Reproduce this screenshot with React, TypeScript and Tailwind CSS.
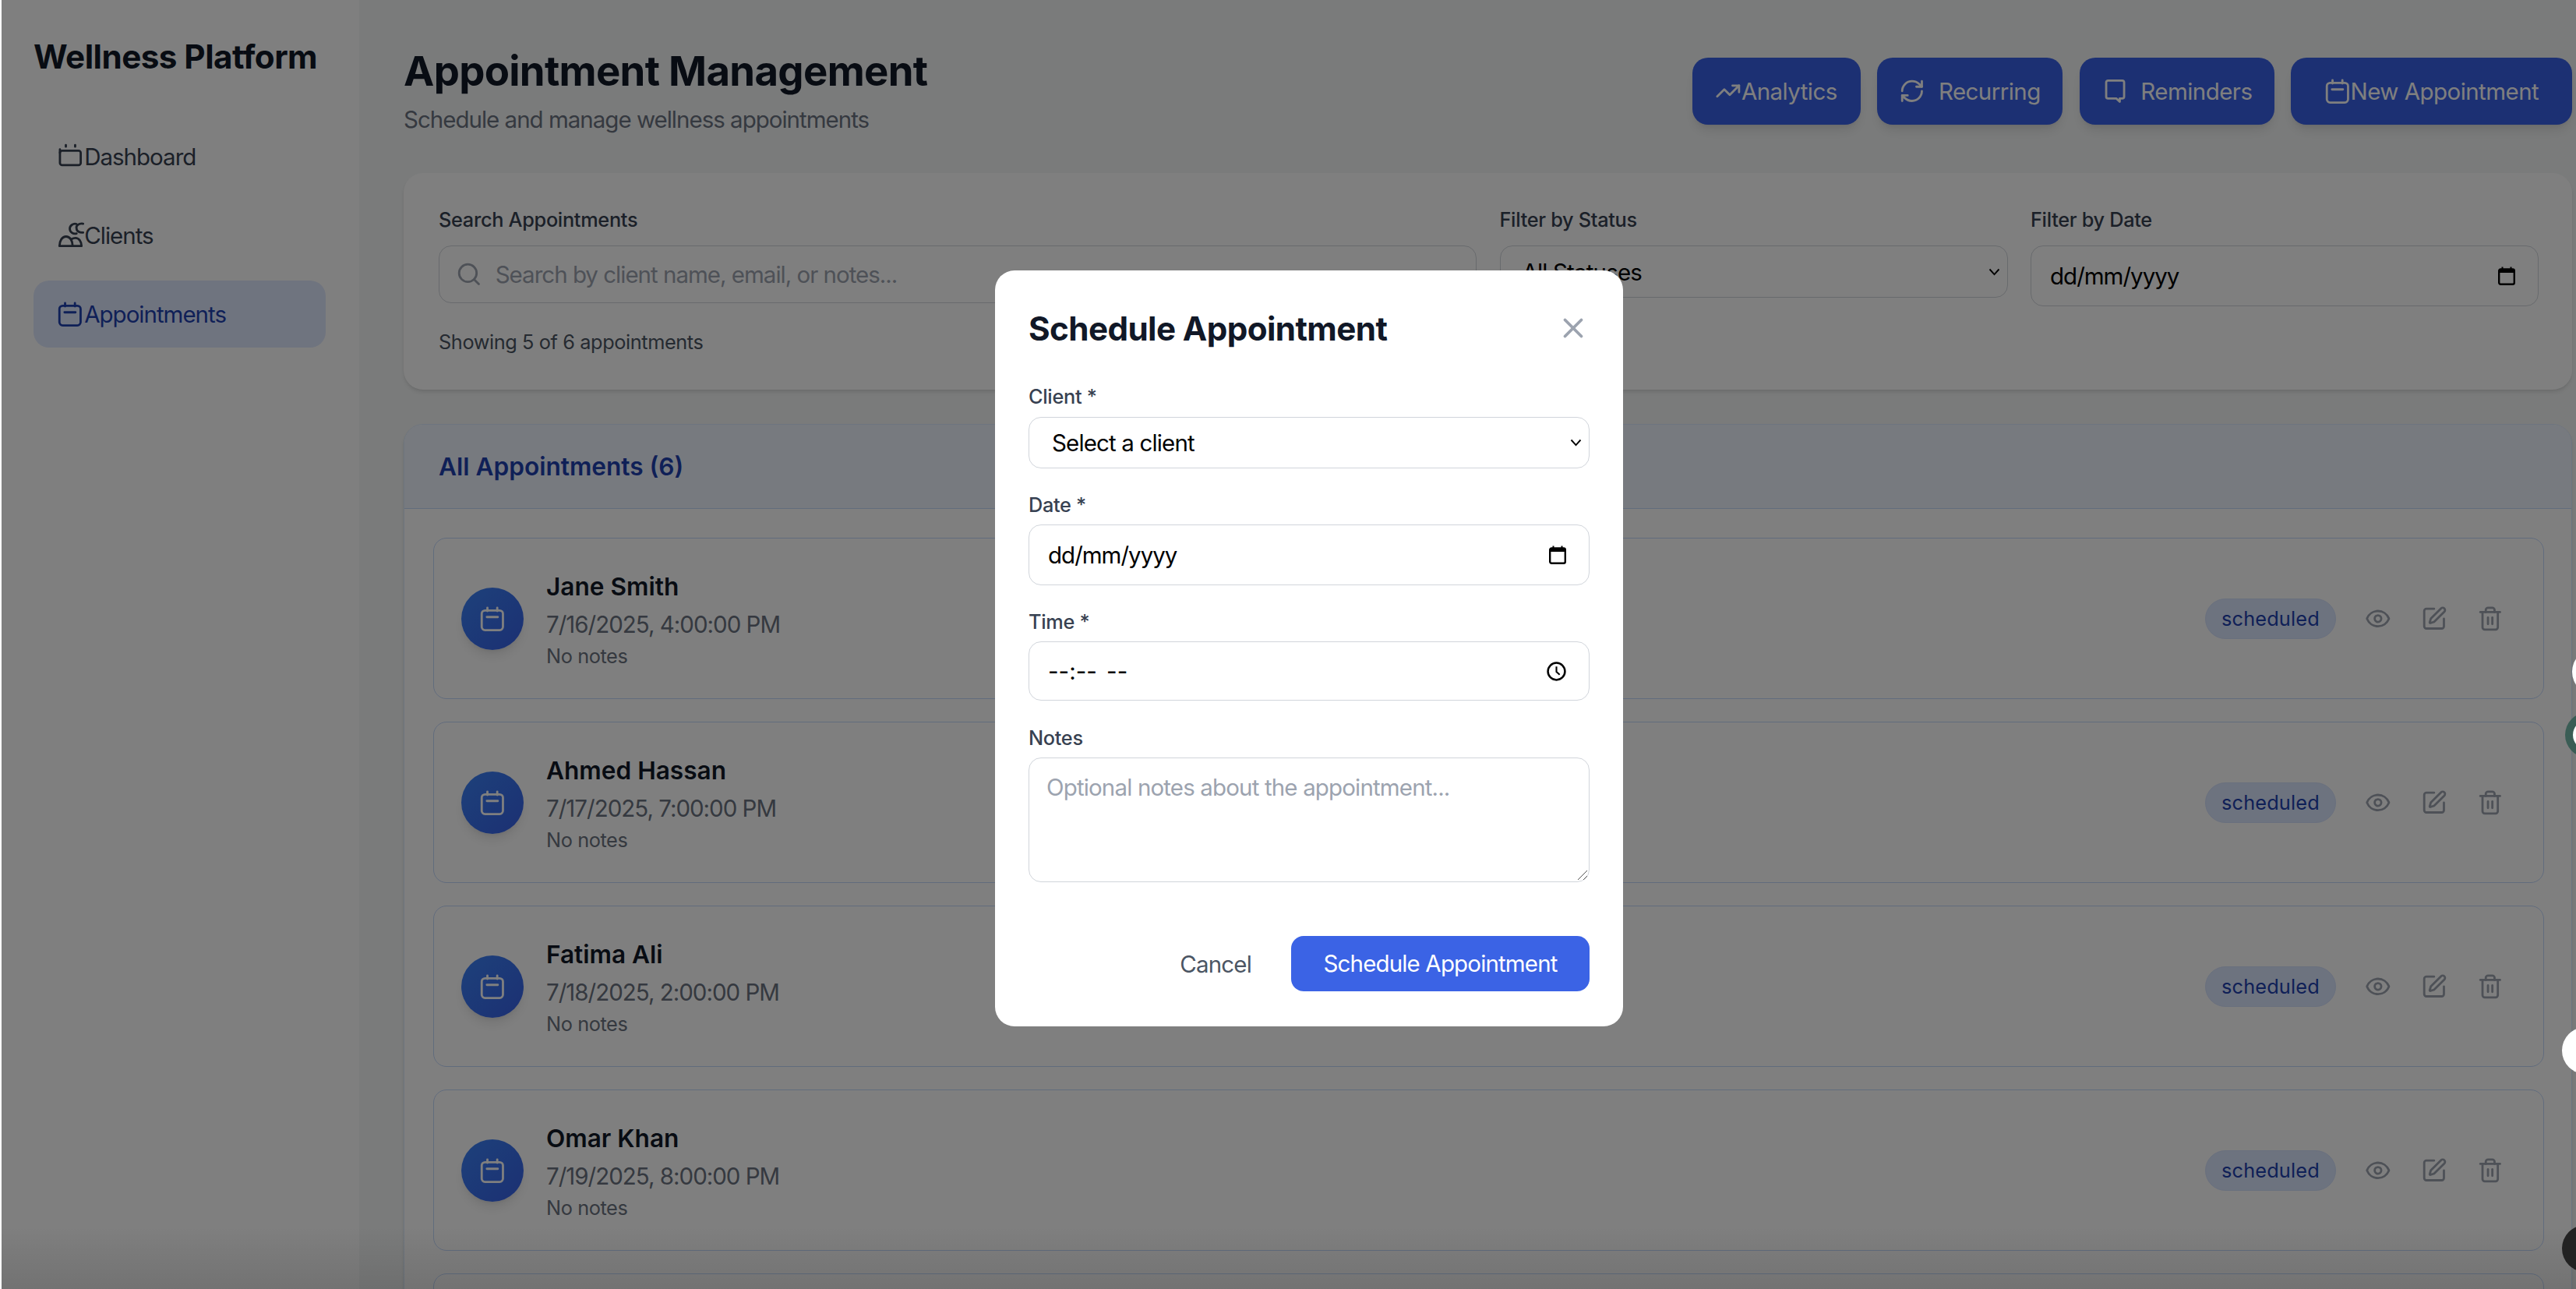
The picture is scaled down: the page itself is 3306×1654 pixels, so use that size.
import { Eye, RefreshCw, Search, SquarePen, Trash2, TrendingUp, X } from "lucide-react";

const ICON = "w-[33.7px] h-[33.7px] shrink-0 overflow-visible";

function CalendarIcon({ className = ICON }: { className?: string }) {
  return (
    <svg viewBox="0 0 24 24" fill="none" stroke="currentColor" strokeWidth="2" strokeLinecap="round" strokeLinejoin="round" className={className}>
      <rect x="2.3" y="4.5" width="19.4" height="18" rx="3" />
      <path d="M7.5 2v3M16.5 2v3M7 10.5h10" />
    </svg>
  );
}

function DashboardIcon() {
  return (
    <svg viewBox="0 0 24 24" fill="none" stroke="currentColor" strokeWidth="2" strokeLinecap="round" strokeLinejoin="round" className={ICON}>
      <rect x="2.8" y="6.7" width="19" height="13.2" rx="2" />
      <path d="M8.2 1.6v1.4M16.7 1.6v1.4M2.8 5.500v3" />
    </svg>
  );
}

function ClientsIcon() {
  return (
    <svg viewBox="0 0 24 24" fill="none" stroke="currentColor" strokeWidth="2" strokeLinecap="round" strokeLinejoin="round" className={ICON}>
      <path d="M18 1.8a4.8 4.5 0 1 0 0 8.6" />
      <path d="M24 1.5a5 3.6 0 0 0-6 4.4a5 3.6 0 0 0 6 3.6" />
      <path d="M2.4 21.8c0-5 2.6-8.6 6-8.6s6 3.6 6 8.6" />
      <path d="M13.5 15.5c1-.6 2.300-1 3.500-1c3.200 0 5.500 3.200 5.500 7.300" />
      <path d="M2.400 21.800h20.100" />
    </svg>
  );
}

function ReminderIcon() {
  return (
    <svg viewBox="0 0 24 24" fill="none" stroke="currentColor" strokeWidth="2" strokeLinecap="round" strokeLinejoin="round" className={ICON}>
      <path d="M6 2.400h13a1.700 1.700 0 0 1 1.700 1.700v13a1.700 1.700 0 0 1-1.700 1.700h-2.300v3l-3-3H6a1.700 1.700 0 0 1-1.700-1.700v-13A1.700 1.700 0 0 1 6 2.400z" />
    </svg>
  );
}

function Chevron({ className }: { className: string }) {
  return (
    <svg viewBox="0 0 12 8" fill="none" stroke="currentColor" strokeWidth="1.500" className={className}>
      <path d="M1.200 1.200 6 6.500l4.800-5.300" />
    </svg>
  );
}

function NativeCalendar() {
  return (
    <svg viewBox="0 0 22 24" className="w-[22px] h-[24px] shrink-0" fill="none" stroke="#000">
      <rect x="1.200" y="3.500" width="19.600" height="19.300" rx="2" strokeWidth="2.400" />
      <path d="M1 3.500h20V8H1z" fill="#000" stroke="none" />
      <path d="M5.500 0.500v3M16.500 0.500v3" strokeWidth="2" />
    </svg>
  );
}

function NativeClock() {
  return (
    <svg viewBox="0 0 24 24" className="w-[25px] h-[25px] shrink-0" fill="none" stroke="#000">
      <circle cx="12" cy="12" r="10.500" strokeWidth="2.400" />
      <path d="M12 6v6.500l4 3.500" strokeWidth="2" />
    </svg>
  );
}

const topButtons = [
  { label: "Analytics", icon: <TrendingUp className={ICON} strokeWidth={2} />, cls: "px-[29.5px] w-[216px]" },
  { label: "Recurring", icon: <RefreshCw className={ICON} strokeWidth={2} />, cls: "px-[29.5px] gap-[17px] w-[238px]" },
  { label: "Reminders", icon: <ReminderIcon />, cls: "px-[29.5px] gap-[17px] w-[250px]" },
  { label: "New Appointment", icon: <CalendarIcon />, cls: "px-[44px] w-[361px]" },
];

const rows = [
  { name: "Jane Smith", when: "7/16/2025, 4:00:00 PM" },
  { name: "Ahmed Hassan", when: "7/17/2025, 7:00:00 PM" },
  { name: "Fatima Ali", when: "7/18/2025, 2:00:00 PM" },
  { name: "Omar Khan", when: "7/19/2025, 8:00:00 PM" },
];

const BODY = "text-[29.5px] tracking-[-0.85px]";
const TIGHT = "text-[29.5px] tracking-[-1px]";
const LABEL = "block text-[25.3px] leading-[36px] font-medium tracking-[-0.3px] text-[#374151]";
const FIELD = "flex items-center border-[1.5px] border-[#d1d5db] rounded-[16px] bg-white text-black";

function Row({ name, when }: { name: string; when: string }) {
  return (
    <div className="h-[207px] shrink-0 flex items-center border-[1.5px] border-[#c3d8fb] rounded-[17px] pl-[35px] pr-[51px] bg-white">
      <div className="w-[80px] h-[80px] rounded-full bg-gradient-to-br from-[#3b82f6] to-[#3860e6] shadow-lg flex items-center justify-center text-white shrink-0">
        <CalendarIcon className="w-[33.7px] h-[33.7px] overflow-visible" />
      </div>
      <div className="ml-[29px] flex-1 mt-[3px]">
        <div className="text-[31.6px] leading-[44px] font-semibold text-[#111827]">{name}</div>
        <div className={`mt-[5px] leading-[42px] text-[#6b7280] ${TIGHT}`}>{when}</div>
        <div className="mt-[2px] text-[25.3px] leading-[36px] tracking-[-0.4px] text-[#6b7280]">No notes</div>
      </div>
      <div className="w-[168px] h-[52px] rounded-full bg-[#dbe6fe] border-[1.5px] border-[#d3e0fc] flex items-center justify-center text-[25.3px] tracking-[0.15px] text-[#1e40af]">
        scheduled
      </div>
      <div className="flex items-center ml-[37px] gap-[38.5px] text-[#9ca3af]">
        <Eye className="w-[33.7px] h-[33.7px]" strokeWidth={2} />
        <SquarePen className="w-[33.7px] h-[33.7px]" strokeWidth={2} />
        <Trash2 className="w-[33.7px] h-[33.7px]" strokeWidth={2} />
      </div>
    </div>
  );
}

export default function App() {
  return (
    <div className="relative w-[3306px] h-[1654px] overflow-hidden flex bg-white pl-[2px] [font-family:Inter,sans-serif]">
      <aside className="w-[459px] shrink-0 bg-white pl-[41px] pr-[43px] pt-[50px]">
        <h1 className="text-[42.2px] leading-[46px] font-bold tracking-[-0.55px] text-[#111827]">Wellness Platform</h1>
        <nav className={`mt-[62px] flex flex-col gap-[15px] text-[#374151] ${TIGHT}`}>
          <div className="h-[86px] flex items-center gap-[2px] px-[29.5px] rounded-[20px]"><DashboardIcon />Dashboard</div>
          <div className="h-[86px] flex items-center gap-[2px] px-[29.5px] rounded-[20px]"><ClientsIcon />Clients</div>
          <div className="h-[86px] flex items-center gap-[2px] px-[29.5px] rounded-[20px] bg-[#dfe8ff] text-[#1e40af]"><CalendarIcon />Appointments</div>
        </nav>
      </aside>

      <main className="flex-1 min-w-0 bg-[#f5f7f7] pl-[57px] pr-[5px] pt-[66px]">
        <header className="h-[156px] flex justify-between items-start">
          <div>
            <h2 className="text-[52.7px] leading-[50px] font-bold tracking-[-0.7px] text-[#111827]">Appointment Management</h2>
            <p className={`mt-[16px] leading-[42px] text-[#6b7280] ${TIGHT}`}>Schedule and manage wellness appointments</p>
          </div>
          <div className="flex gap-[21.5px] mt-[8px]">
            {topButtons.map((b) => (
              <div key={b.label} className={`h-[86px] flex items-center justify-center rounded-[20px] bg-[#3860e6] text-white text-[29.5px] tracking-[-0.55px] shadow-lg ${b.cls}`}>
                {b.icon}
                <span className="whitespace-nowrap">{b.label}</span>
              </div>
            ))}
          </div>
        </header>

        <section className="h-[278px] bg-white rounded-[25px] shadow-md px-[45px] pt-[42px]">
          <div className="grid grid-cols-[1332px_652px_652px] gap-x-[29.5px] items-start">
            <div>
              <label className={LABEL}>Search Appointments</label>
              <div className="mt-[15px] h-[74px] flex items-center border-[1.5px] border-[#d1d5db] rounded-[16px] pl-[21px] text-[#9ca3af]">
                <Search className="w-[33.7px] h-[33.7px] shrink-0" strokeWidth={2} />
                <span className={`ml-[17px] pt-[1px] ${TIGHT}`}>Search by client name, email, or notes...</span>
              </div>
            </div>
            <div>
              <label className={LABEL}>Filter by Status</label>
              <div className={`mt-[15px] h-[67px] justify-between pl-[28px] pr-[9px] ${FIELD}`}>
                <span className={`pt-[1px] ${BODY}`}>All Statuses</span>
                <Chevron className="w-[15px] h-[10px] text-black" />
              </div>
            </div>
            <div>
              <label className={LABEL}>Filter by Date</label>
              <div className={`mt-[15px] h-[78px] justify-between pl-[24px] pr-[29px] ${FIELD}`}>
                <span className={TIGHT}>dd/mm/yyyy</span>
                <NativeCalendar />
              </div>
            </div>
          </div>
          <p className="mt-[28px] text-[25.3px] leading-[36px] tracking-[-0.4px] text-[#4b5563]">Showing 5 of 6 appointments</p>
        </section>

        <section className="mt-[44px] bg-white rounded-[25px] shadow-md border-[1.5px] border-[#dbeafe] h-[1200px] overflow-hidden">
          <div className="h-[108px] flex items-center px-[44px] bg-[#eef4ff] border-b-[1.5px] border-[#c3d8fb]">
            <h3 className="text-[31.6px] font-semibold text-[#1e40af]">All Appointments (6)</h3>
          </div>
          <div className="flex flex-col gap-[29px] pt-[37px] pl-[37px] pr-[35px]">
            {rows.map((r) => (
              <Row key={r.name} name={r.name} when={r.when} />
            ))}
            <div className="h-[207px] shrink-0 border-[1.5px] border-[#c3d8fb] rounded-[17px] bg-white" />
          </div>
        </section>
      </main>

      {/* dimming layer with the dialog */}
      <div className="absolute inset-0 left-[2px] bg-black/50 flex items-center justify-center pl-[52px] pt-[10px]">
        <div className="absolute inset-x-0 bottom-0 h-[80px] bg-gradient-to-t from-black/10 to-transparent" />
        <div className="relative w-[806px] h-[970px] bg-white rounded-[25px] px-[43px] pt-[52px]">
          <div className="flex items-center justify-between h-[46px]">
            <h2 className="text-[42.2px] leading-[46px] font-bold tracking-[-0.6px] text-[#111827]">Schedule Appointment</h2>
            <X className="w-[42px] h-[42px] -mt-[3px] text-[#9ca3af]" strokeWidth={2.200} />
          </div>

          <label className={`${LABEL} mt-[46px]`}>Client *</label>
          <div className={`mt-[8px] h-[66px] justify-between pl-[29px] pr-[9px] ${FIELD}`}>
            <span className={BODY}>Select a client</span>
            <Chevron className="w-[15px] h-[10px] text-black" />
          </div>

          <label className={`${LABEL} mt-[29px]`}>Date *</label>
          <div className={`mt-[7px] h-[78px] justify-between pl-[24px] pr-[29px] ${FIELD}`}>
            <span className={TIGHT}>dd/mm/yyyy</span>
            <NativeCalendar />
          </div>

          <label className={`${LABEL} mt-[29px]`}>Time *</label>
          <div className={`mt-[7px] h-[76px] justify-between pl-[24px] pr-[29px] ${FIELD}`}>
            <span className="text-[29.5px] [word-spacing:4px]">--:-- --</span>
            <NativeClock />
          </div>

          <label className={`${LABEL} mt-[30px]`}>Notes</label>
          <div className="relative mt-[7px]">
            <textarea
              className={`block w-full h-[160px] resize-none border-[1.5px] border-[#d1d5db] rounded-[16px] px-[22px] pt-[19px] leading-[36px] placeholder:text-[#9ca3af] outline-none ${BODY}`}
              placeholder="Optional notes about the appointment..."
            />
            <svg viewBox="0 0 14 14" className="absolute right-[2px] bottom-[2px] w-[14px] h-[14px]" fill="none" stroke="#555" strokeWidth="1">
              <path d="M1 13 13 1M8 13l5-5" />
            </svg>
          </div>

          <div className="mt-[69px] flex items-center justify-end">
            <span className={`pt-[2px] text-[#4b5563] ${BODY}`}>Cancel</span>
            <div className="ml-[51px] w-[383px] h-[71px] rounded-[16px] bg-[#3b63e5] text-white flex items-center justify-center text-[29.5px] tracking-[-0.85px]">
              Schedule Appointment
            </div>
          </div>
        </div>
      </div>

      {/* floating widgets at the window edge */}
      <div className="absolute left-[3301px] top-[832px] w-[60px] h-[60px] rounded-full bg-white" />
      <div className="absolute left-[3292px] top-[914px] w-[58px] h-[58px] rounded-full bg-[#3a5d55] flex items-center justify-center">
        <div className="w-[38px] h-[38px] rounded-full bg-white" />
      </div>
      <div className="absolute left-[3288px] top-[1318px] w-[60px] h-[60px] rounded-full bg-white" />
      <div className="absolute left-[3288px] top-[1572px] w-[60px] h-[60px] rounded-full bg-[#222222]" />
    </div>
  );
}
